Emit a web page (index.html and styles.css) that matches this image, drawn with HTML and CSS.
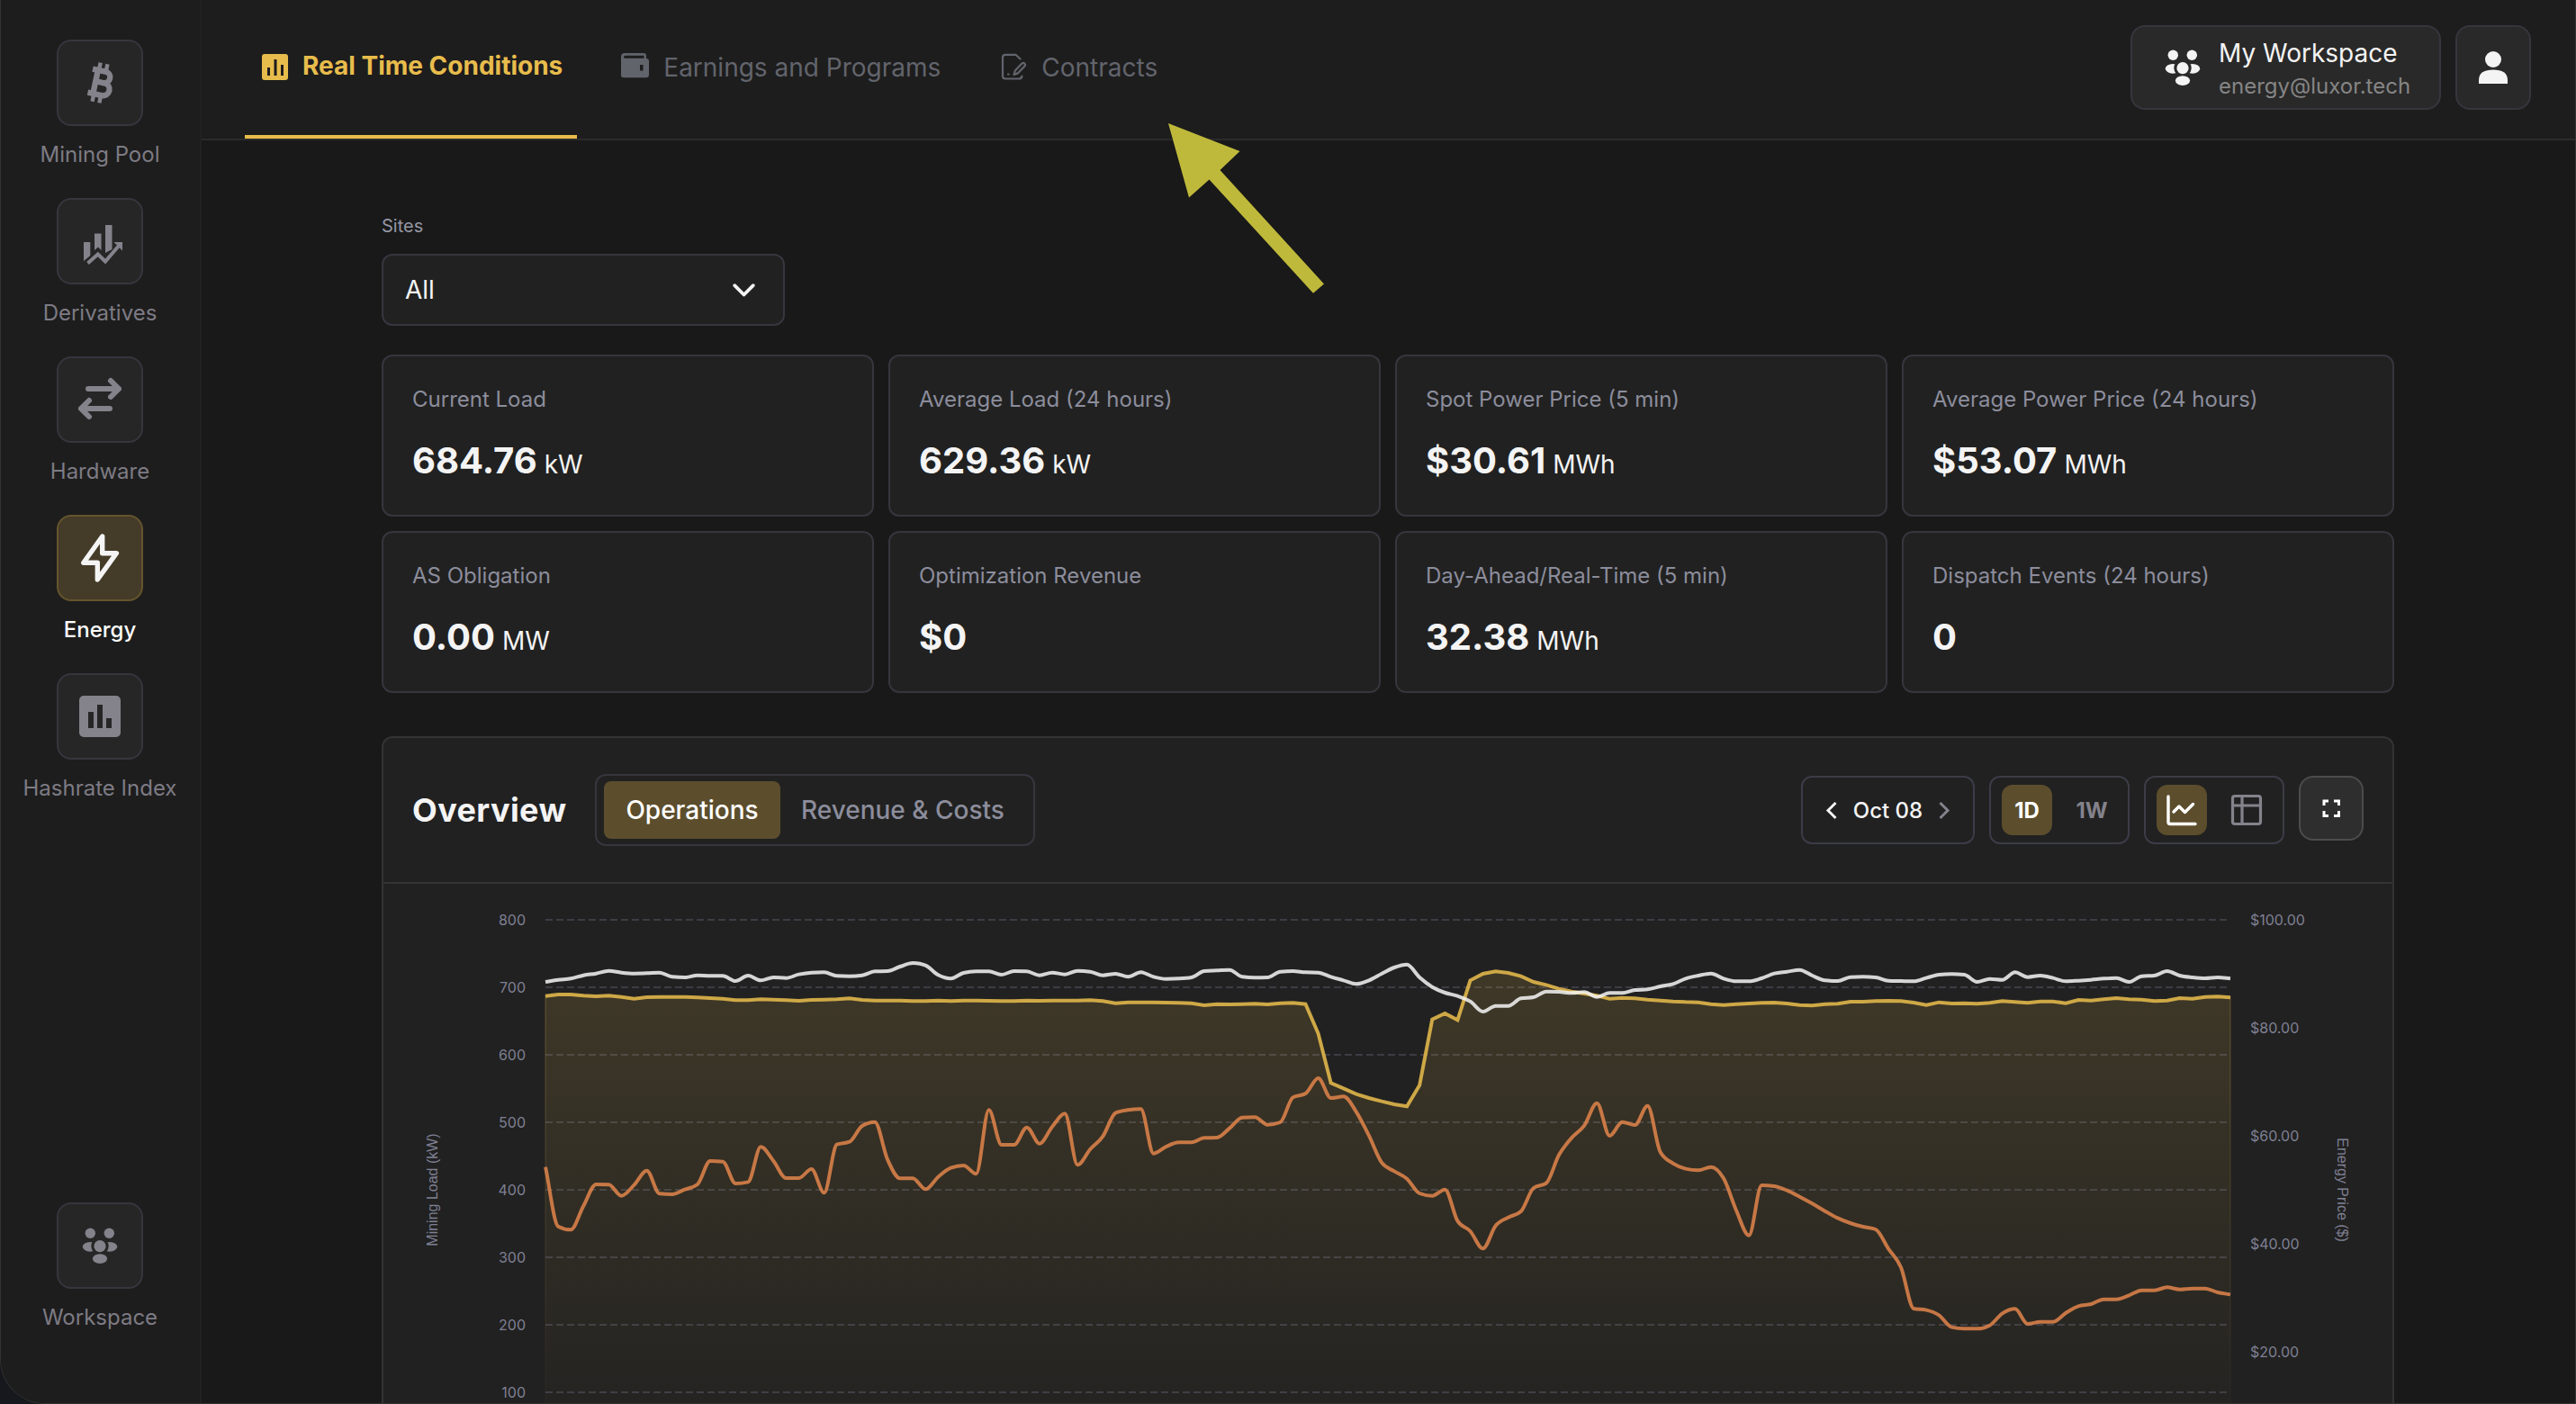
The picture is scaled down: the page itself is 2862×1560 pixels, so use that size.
FILE: index.html
```html
<!DOCTYPE html>
<html lang="en">
<head>
  <meta charset="UTF-8">
  <meta name="viewport" content="width=device-width, initial-scale=1.0">
  <title>Energy - Real Time Conditions</title>
  <link rel="stylesheet" href="styles.css">
</head>
<body>
  <svg class="defs" width="0" height="0">
    <defs>
      <mask id="team-gap">
        <rect width="40" height="40" fill="#fff"/>
        <circle cx="20" cy="20.7" r="9.7" fill="#000"/>
      </mask>
      <symbol id="team" viewBox="0 0 40 40">
        <circle cx="9.3" cy="6.3" r="5.7"/>
        <circle cx="30.3" cy="6.3" r="5.7"/>
        <g mask="url(#team-gap)">
          <ellipse cx="9" cy="21.3" rx="8.2" ry="5.4"/>
          <ellipse cx="31" cy="21.3" rx="8.2" ry="5.4"/>
        </g>
        <circle cx="20" cy="20.7" r="6.6"/>
        <ellipse cx="20" cy="34.6" rx="8.1" ry="5.3"/>
      </symbol>
    </defs>
  </svg>

  <div class="window">
    <aside class="sidebar">
      <a class="side-item">
        <span class="side-icon">
          <svg width="48" height="48" viewBox="0 0 48 48">
            <g transform="translate(24 24) rotate(12)" fill="none" stroke="currentColor" stroke-width="6.4">
              <path d="M-11 -13.5H3.5a6.4 6.4 0 0 1 0 12.8H-4M3.5 -.7H5a7 7 0 0 1 0 14H-11"/>
              <path d="M-5 -13V13"/>
              <path d="M-4 -22V-14M4 -22V-14M-4 14V22M4 14V22" stroke-width="4.4"/>
            </g>
          </svg>
        </span>
        <span class="side-label">Mining Pool</span>
      </a>
      <a class="side-item">
        <span class="side-icon">
          <svg width="48" height="48" viewBox="0 0 48 48">
            <g fill="currentColor">
              <path d="M6 25h7.3v15L6 46zM18 15.5h7.5V34L22 30.5 18 34zM30 6h7.5v27L30 37zM39.5 25H49v9.5z"/>
            </g>
            <path d="M10.5 48.5L21.8 38.5L30 46.5L45.5 28.5" fill="none" stroke="currentColor" stroke-width="4"/>
          </svg>
        </span>
        <span class="side-label">Derivatives</span>
      </a>
      <a class="side-item">
        <span class="side-icon">
          <svg width="48" height="48" viewBox="0 0 48 48" fill="none" stroke="currentColor" stroke-width="6" stroke-linecap="round" stroke-linejoin="round">
            <path d="M11 12H45M36 3L45 12L36 21M35 34H3M12 25L3 34L12 43"/>
          </svg>
        </span>
        <span class="side-label">Hardware</span>
      </a>
      <a class="side-item active">
        <span class="side-icon">
          <svg width="48" height="48" viewBox="0 0 48 48" fill="none" stroke="currentColor" stroke-width="5.4" stroke-linejoin="round">
            <path d="M26.7 0L5.8 29.3H21.3V48L42.4 18.7H26.7z"/>
          </svg>
        </span>
        <span class="side-label">Energy</span>
      </a>
      <a class="side-item">
        <span class="side-icon">
          <svg width="46" height="46" viewBox="0 0 46 46">
            <path fill="currentColor" fill-rule="evenodd" d="M5 0H41a5 5 0 0 1 5 5V41a5 5 0 0 1-5 5H5a5 5 0 0 1-5-5V5a5 5 0 0 1 5-5zM10 18V36h6V18zM20 10V36h6V10zM30 25V36h6V25z"/>
          </svg>
        </span>
        <span class="side-label">Hashrate Index</span>
      </a>
      <a class="side-item side-bottom">
        <span class="side-icon"><svg width="40" height="40" fill="currentColor"><use href="#team"/></svg></span>
        <span class="side-label">Workspace</span>
      </a>
    </aside>

    <div class="main">
      <header class="topbar">
        <nav class="tabs">
          <a class="tab active">
            <svg width="32" height="32" viewBox="0 0 32 32">
              <path fill="currentColor" fill-rule="evenodd" d="M6 3H29a3 3 0 0 1 3 3V29a3 3 0 0 1-3 3H6a3 3 0 0 1-3-3V6a3 3 0 0 1 3-3zM9 18V27h3V18zM16.5 9V27h3V9zM24 15V27h3V15z"/>
            </svg>
            Real Time Conditions
          </a>
          <a class="tab">
            <svg width="32" height="32" viewBox="0 0 32 32">
              <path fill="currentColor" fill-rule="evenodd" d="M5 0H26a3 3 0 0 1 3 3V6a3 3 0 0 1 3 3V24a3.200 3.200 0 0 1-3.200 3.200H4A3 3 0 0 1 1 24V4a4 4 0 0 1 4-4zM5.500 2.700a1.500 1.500 0 0 0 0 3H26.500V2.700zM22 13V19.500h3.500V13z"/>
            </svg>
            Earnings and Programs
          </a>
          <a class="tab">
            <svg width="32" height="32" viewBox="0 0 32 32" fill="none" stroke="currentColor" stroke-width="2.200" stroke-linecap="round" stroke-linejoin="round">
              <path d="M24.500 6.500L19.500 1.800H8a3 3 0 0 0-3 3V25.500a3 3 0 0 0 3 3H23a3.500 3.500 0 0 0 3.500-3"/>
              <path d="M17.500 24L18.800 19.500L26.300 11.600a2.100 2.100 0 0 1 3 3L21.700 22.400z"/>
              <path d="M11 23.500h.7"/>
            </svg>
            Contracts
          </a>
        </nav>
        <div class="account">
          <button class="workspace-btn">
            <svg width="40" height="40" fill="currentColor"><use href="#team"/></svg>
            <span class="workspace-text">
              <span class="workspace-name">My Workspace</span>
              <span class="workspace-mail">energy@luxor.tech</span>
            </span>
          </button>
          <button class="user-btn">
            <svg width="32" height="36" viewBox="0 0 32 36" fill="currentColor">
              <circle cx="16" cy="9" r="9"/>
              <path d="M0 36V32C0 24 6 20.500 16 20.500S32 24 32 32V36z"/>
            </svg>
          </button>
        </div>
      </header>

      <main class="content">
        <label class="sites-label">Sites</label>
        <div class="select">
          <span>All</span>
          <svg width="25" height="15" viewBox="0 0 25 15" fill="none" stroke="currentColor" stroke-width="3.800" stroke-linecap="round" stroke-linejoin="round"><path d="M2.200 2.200L12.500 12.500L22.800 2.200"/></svg>
        </div>

        <section class="stats">
          <div class="card"><p class="card-label">Current Load</p><p class="card-value">684.76<small>kW</small></p></div>
          <div class="card"><p class="card-label">Average Load (24 hours)</p><p class="card-value">629.36<small>kW</small></p></div>
          <div class="card"><p class="card-label">Spot Power Price (5 min)</p><p class="card-value">$30.61<small>MWh</small></p></div>
          <div class="card"><p class="card-label">Average Power Price (24 hours)</p><p class="card-value">$53.07<small>MWh</small></p></div>
          <div class="card"><p class="card-label">AS Obligation</p><p class="card-value">0.00<small>MW</small></p></div>
          <div class="card"><p class="card-label">Optimization Revenue</p><p class="card-value">$0</p></div>
          <div class="card"><p class="card-label">Day-Ahead/Real-Time (5 min)</p><p class="card-value">32.38<small>MWh</small></p></div>
          <div class="card"><p class="card-label">Dispatch Events (24 hours)</p><p class="card-value">0</p></div>
        </section>

        <section class="panel">
          <div class="panel-head">
            <h2>Overview</h2>
            <div class="segment">
              <button class="active">Operations</button>
              <button>Revenue &amp; Costs</button>
            </div>
            <div class="controls">
              <div class="box date-box">
                <svg width="12" height="19" viewBox="0 0 12 19" fill="none" stroke="currentColor" stroke-width="3"><path d="M10.500 1L2 9.500L10.500 18"/></svg>
                <span>Oct 08</span>
                <svg class="muted" width="12" height="19" viewBox="0 0 12 19" fill="none" stroke="currentColor" stroke-width="3"><path d="M1.500 1L10 9.500L1.500 18"/></svg>
              </div>
              <div class="box toggle">
                <button class="active">1D</button>
                <button>1W</button>
              </div>
              <div class="box toggle">
                <button class="active">
                  <svg width="36" height="36" viewBox="0 0 36 36" fill="none" stroke="currentColor" stroke-width="3.400" stroke-linecap="round" stroke-linejoin="round">
                    <path d="M3 3V31.500a2 2 0 0 0 2 2H33"/>
                    <path d="M9 20L15 14L21.500 20.500L30.500 11.500"/>
                  </svg>
                </button>
                <button>
                  <svg width="36" height="36" viewBox="0 0 36 36" fill="none" stroke="currentColor" stroke-width="3.200">
                    <rect x="2.500" y="2.500" width="31" height="31" rx="2.500"/>
                    <path d="M2.500 13H33.500M13 2.500V33.500"/>
                  </svg>
                </button>
              </div>
              <button class="full-btn">
                <svg width="20" height="20" viewBox="0 0 20 20" fill="none" stroke="currentColor" stroke-width="3"><path d="M2 7V2H7M13 2H18.500V7M18.500 13V18.500H13M7 18.500H2V13"/></svg>
              </button>
            </div>
          </div>
          <svg id="chart" class="chart" width="2232" height="620" viewBox="0 0 2232 620">
            <defs>
              <linearGradient id="load-fill" gradientUnits="userSpaceOnUse" x1="0" y1="97" x2="0" y2="640">
                <stop offset="0" stop-color="#e8bc4c" stop-opacity=".15"/>
                <stop offset="1" stop-color="#e8bc4c" stop-opacity="0"/>
              </linearGradient>
            </defs>
            <g id="grid" class="grid"></g>
            <path id="load-area" fill="url(#load-fill)" stroke="url(#load-fill)" stroke-width="2"/>
            <path id="load-line" class="line load"/>
            <path id="price-line" class="line price"/>
            <path id="hash-line" class="line hash"/>
            <g id="left-ticks" class="tick" text-anchor="end"></g>
            <g id="right-ticks" class="tick"></g>
            <text class="axis-title" transform="translate(60 340) rotate(-90)" text-anchor="middle">Mining Load (kW)</text>
            <text class="axis-title" transform="translate(2171 340) rotate(90)" text-anchor="middle">Energy Price ($)</text>
          </svg>
        </section>
      </main>
    </div>
  </div>

  <svg class="pointer" width="176" height="192" viewBox="0 0 176 192">
    <path d="M0 0L79.500 31L57.500 52L173 178.500L161 188.700L45.500 62.500L23 82.500z"/>
  </svg>

  <script src="chart.js"></script>
</body>
</html>
```
FILE: styles.css
```css
* { box-sizing: border-box; }
body { margin: 0; height: 1560px; overflow: hidden; background: #16181d; color: #f4f4f4; font-family: Inter, "Noto Sans", sans-serif; font-size: 28px; }
button { font: inherit; color: inherit; background: none; border: 0; padding: 0; }
svg { display: block; flex: none; overflow: visible; }
h2, p { margin: 0; }
.defs { position: absolute; }

.window { display: flex; height: 1560px; overflow: hidden; background: #191919; border: 1px solid #333; border-top: 0; border-radius: 0 0 0 50px; }

/* sidebar */
.sidebar { width: 223px; flex: none; display: flex; flex-direction: column; align-items: center; padding: 44px 1px 0 0; background: #1d1d1d; border-right: 2px solid #212121; }
.side-item { display: flex; flex-direction: column; align-items: center; height: 176px; color: #84828b; }
.side-icon { width: 96px; height: 96px; display: flex; align-items: center; justify-content: center; border: 2px solid #37353e; border-radius: 16px; background: #262626; }
.side-label { margin-top: 16px; font-size: 24px; line-height: 32px; color: #7d7b84; white-space: nowrap; }
.side-item.active .side-icon { background: #443b28; border-color: #65552e; color: #f4f4f4; }
.side-item.active .side-label { color: #fff; font-weight: 500; }
.side-bottom { margin-top: auto; height: 223px; }

/* top bar */
.main { flex: 1; display: flex; flex-direction: column; min-width: 0; }
.topbar { flex: none; height: 156px; display: flex; justify-content: space-between; padding: 0 49px 0 48px; background: #1d1d1d; border-bottom: 2px solid #2b2b2b; }
.tabs { display: flex; gap: 32px; }
.tab { display: flex; align-items: center; gap: 16px; padding: 0 16px 4px; color: #62646c; white-space: nowrap; }
.tab.active { color: #e8bc4c; font-weight: 700; border-bottom: 4px solid #e8bc4c; }
.account { display: flex; gap: 16px; align-items: flex-start; padding-top: 28px; }
.workspace-btn, .user-btn { height: 94px; display: flex; align-items: center; border: 2px solid #37353e; border-radius: 16px; background: #292929; }
.workspace-btn { width: 345px; padding-left: 36px; gap: 20px; text-align: left; }
.workspace-text { display: flex; flex-direction: column; line-height: 36px; padding-top: 6px; }
.workspace-mail { font-size: 24px; line-height: 38px; color: #858585; }
.user-btn { width: 84px; justify-content: center; }

/* content */
.content { padding: 83px 200px 0 200px; width: 2636px; }
.sites-label { display: block; font-size: 20px; line-height: 24px; color: #9496a3; }
.select { width: 448px; height: 80px; margin-top: 19px; display: flex; align-items: center; justify-content: space-between; padding: 0 31px 0 24px; border: 2px solid #37353e; border-radius: 12px; background: #212121; }

.stats { display: grid; grid-template-columns: repeat(4, 1fr); gap: 16px; margin-top: 32px; }
.card { height: 180px; padding: 32px; border: 2px solid #37353e; border-radius: 12px; background: #212121; }
.card-label { font-size: 24px; line-height: 32px; color: #8c8d9c; }
.card-value { margin-top: 28px; font-size: 40px; font-weight: 700; line-height: 48px; }
.card-value small { margin-left: 8px; font-size: 28px; font-weight: 400; }

/* overview panel */
.panel { margin-top: 48px; border: 2px solid #333; border-radius: 12px; background: #212121; }
.panel-head { height: 162px; display: flex; align-items: center; padding: 0 32px; border-bottom: 2px solid #333; }
.panel-head h2 { width: 203px; font-size: 36px; font-weight: 700; letter-spacing: .4px; }
.segment { width: 489px; height: 80px; display: flex; padding: 6px 8px; border: 2px solid #37353e; border-radius: 12px; }
.segment button { padding: 0 23px; border-radius: 8px; color: #8c8d9c; font-weight: 500; }
.segment button.active { width: 196px; background: #5c4e2d; color: #fff; }
.controls { margin-left: auto; display: flex; align-items: flex-start; gap: 16px; font-size: 24px; }
.box { height: 76px; display: flex; border: 2px solid #3b3c47; border-radius: 12px; }
.date-box { width: 193px; align-items: center; justify-content: space-between; padding: 0 26px; font-weight: 500; }
.muted { color: #84828b; }
.toggle { padding: 8px 12px; gap: 16px; }
.toggle button { width: 56px; height: 56px; display: flex; align-items: center; justify-content: center; border-radius: 12px; color: #84828b; font-weight: 700; }
.toggle button.active { background: #5c4e2d; color: #fff; }
.full-btn { width: 72px; height: 72px; display: flex; align-items: center; justify-content: center; border: 2px solid #4c4c4c; border-radius: 16px; background: #2e2e2e; color: #fff; }

/* chart */
.grid line { stroke: #3d3c45; stroke-width: 2; stroke-dasharray: 8 4; }
.line { fill: none; stroke-width: 4; opacity: .85; }
.load { stroke: #e8bc4c; }
.price { stroke: #e2854b; }
.hash { stroke: #f6f6f6; }
.tick { font-size: 16px; fill: #7f8093; }
.axis-title { font-family: "Liberation Sans", Arial, sans-serif; font-size: 16px; fill: #7f8093; }

.pointer { position: absolute; left: 1298px; top: 137px; fill: #bfb93b; }
```
FILE: chart.js
```javascript
// samples run left to right, in thirds of a pixel below the BASE line
const load = [200,195,195,199,201,199,203,209,204,203,203,203,205,207,209,214,214,211,212,214,216,213,212,211,208,213,215,215,215,217,217,215,217,215,215,216,217,217,215,216,215,215,215,214,217,224,221,221,221,222,223,224,231,227,228,227,226,228,224,223,227,325,490,508,527,540,551,561,568,497,278,258,280,148,126,118,123,134,153,163,176,185,192,199,209,206,208,212,215,218,220,221,227,230,227,225,223,222,225,230,232,227,226,219,219,217,216,217,222,230,221,225,224,226,223,217,220,223,218,218,224,213,215,211,207,211,212,217,215,207,209,203,202,205];
const price = [770,968,979,900,828,829,866,830,782,859,861,845,828,750,752,825,820,703,750,807,807,777,856,695,686,633,620,745,808,808,844,803,773,765,793,580,696,696,638,692,636,592,763,711,668,590,580,577,725,702,688,688,673,672,641,605,604,629,621,538,525,474,540,535,586,665,755,784,809,858,866,845,950,984,1042,966,938,918,840,824,730,673,632,557,666,620,630,566,720,758,776,781,770,808,915,998,831,834,848,869,892,917,940,957,969,978,1042,1105,1242,1247,1264,1304,1309,1309,1298,1258,1243,1293,1286,1286,1257,1234,1227,1211,1211,1198,1181,1181,1171,1178,1175,1175,1188,1195];
const hash = [153,146,142,131,125,116,122,125,124,122,136,138,131,133,133,150,132,148,138,140,128,122,121,133,134,131,118,117,102,90,98,130,142,123,118,118,129,117,118,131,122,128,116,119,131,126,136,121,136,143,142,138,117,115,113,136,139,138,119,117,121,122,136,148,160,148,126,105,95,138,170,189,200,218,252,233,233,208,204,185,186,190,187,203,190,190,180,178,168,160,142,132,125,142,151,151,141,125,119,113,132,148,150,137,136,138,149,150,151,140,129,127,129,153,143,146,121,137,132,140,151,149,146,142,140,153,134,132,117,132,138,141,138,142];

const LEFT = 180, RIGHT = 2052, TOP = 40, BASE = 58;

function toPoints(values) {
  const step = (RIGHT - LEFT) / (values.length - 1);
  return values.map((v, i) => [LEFT + i * step, BASE + v / 3]);
}

// monotone cubic curve through the points
function curve(p) {
  const slope = (a, b) => (b[1] - a[1]) / (b[0] - a[0]);
  const m = p.map((pt, i) => {
    if (i === 0) return slope(p[0], p[1]);
    if (i === p.length - 1) return slope(p[i - 1], pt);
    const a = slope(p[i - 1], pt), b = slope(pt, p[i + 1]);
    if (a * b <= 0) return 0;
    return Math.sign(a) * Math.min(Math.abs(a), Math.abs(b), Math.abs(a + b) / 4) * 2;
  });
  let d = 'M' + p[0];
  for (let i = 1; i < p.length; i++) {
    const h = (p[i][0] - p[i - 1][0]) / 3;
    d += `C${p[i - 1][0] + h},${p[i - 1][1] + h * m[i - 1]},${p[i][0] - h},${p[i][1] - h * m[i]},${p[i]}`;
  }
  return d;
}

const set = (id, d) => document.getElementById(id).setAttribute('d', d);
const loadPath = 'M' + toPoints(load).join('L');
set('load-line', loadPath);
set('load-area', loadPath + `V640H${LEFT}Z`);
set('price-line', curve(toPoints(price)));
set('hash-line', curve(toPoints(hash)));

let grid = '', left = '', right = '';
for (let i = 0; i < 8; i++) {
  const y = TOP + i * 75;
  grid += `<line x1="${LEFT}" y1="${y}" x2="${RIGHT}" y2="${y}"/>`;
  left += `<text x="158" y="${y + 6}">${800 - i * 100}</text>`;
}
for (let i = 0; i < 5; i++) {
  right += `<text x="2074" y="${TOP + i * 120 + 6}">$${100 - i * 20}.00</text>`;
}
document.getElementById('grid').innerHTML = grid;
document.getElementById('left-ticks').innerHTML = left;
document.getElementById('right-ticks').innerHTML = right;
```
